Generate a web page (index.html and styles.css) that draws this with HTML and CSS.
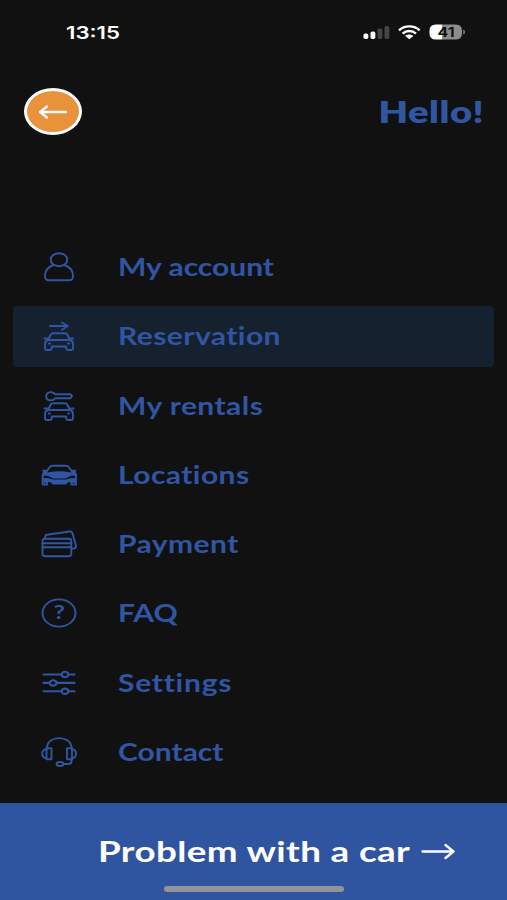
FILE: index.html
```html
<!DOCTYPE html>
<html lang="en">
<head>
    <meta charset="UTF-8">
    <title>Menu</title>
    <link rel="stylesheet" href="styles.css">
</head>
<body>

<div class="screen">
    <div class="status-bar">
        <span class="time">13:15</span>
        <svg class="status-icons" width="104" height="20" viewBox="0 0 104 20">
            <!-- signal -->
            <rect x="1.5" y="11.5" width="4.8" height="5.5" rx="1.8" fill="#fff"/>
            <rect x="8.5" y="9.5" width="4.8" height="7.5" rx="1.8" fill="#fff"/>
            <rect x="15.5" y="6.5" width="4.8" height="10.5" rx="1.8" fill="#454545"/>
            <rect x="22.5" y="4" width="4.8" height="13" rx="1.8" fill="#454545"/>
            <!-- wifi -->
            <g fill="none" stroke="#fff" stroke-width="2.4">
                <path d="M37 8.4C42.3 3 52.3 3 57.6 8.4"/>
                <path d="M40.6 11.6C44.3 8.2 50.3 8.2 54 11.6"/>
            </g>
            <path d="M43.2 14C45.6 12 49 12 51.4 14L47.3 17.2Z" fill="#fff"/>
            <!-- battery -->
            <path d="M74 2.5H80.5V17.5H74Q67.5 17.5 67.5 11.5V8.5Q67.5 2.5 74 2.5Z" fill="#fff"/>
            <path d="M80.5 2.5H93.5Q100 2.5 100 8.5V11.5Q100 17.5 93.5 17.5H80.5Z" fill="#8c8c8c"/>
            <path d="M101.3 7.5Q103 8 103 10T101.3 12.5Z" fill="#8c8c8c"/>
            <text class="battery-text" x="75.5" y="14.7" textLength="17" lengthAdjust="spacingAndGlyphs">41</text>
        </svg>
    </div>

    <header class="header">
        <button class="back" type="button" aria-label="Back">
            <svg width="30" height="16" viewBox="0 0 30 16"><path d="M28 8H2M9 2.5L2 8L9 13.5"/></svg>
        </button>
        <h1 class="hello">Hello!</h1>
    </header>

    <nav class="menu">
        <a class="item">
            <svg class="icon" viewBox="0 0 40 36">
                <ellipse cx="20" cy="10.7" rx="8.3" ry="6.5"/>
                <path d="M14.5 16C9 18 6 22 6 27Q6 31.3 10 31.3H30Q34 31.3 34 27C34 22 31 18 25.5 16"/>
            </svg>
            <span class="label tight">My account</span>
        </a>
        <a class="item active">
            <svg class="icon" viewBox="0 0 40 36">
                <path d="M11 8H28.5M23 4.5L28.8 8L23 11.8"/>
                <use href="#car"/>
            </svg>
            <span class="label">Reservation</span>
        </a>
        <a class="item">
            <svg class="icon" viewBox="0 0 40 36">
                <path d="M16 6.3H31.500L33 8L31.500 10.300H16C14.500 13 8.500 13.500 7.300 9.500C6.500 6 9 4.100 11.800 4.100Q14.800 4.100 16 6.300Z"/>
                <g id="car">
                    <path d="M9 22L11.5 17Q12.300 15.300 14.500 15.300H25.500Q27.700 15.300 28.500 17L31 22"/>
                    <path d="M5.500 20.500H8.500M31.500 20.500H34.500M9 22H31"/>
                    <path d="M9 22Q6 23 6 26V30Q6 32 8 32H10.500Q12.800 32 12.800 30V28.500H27.200V30Q27.200 32 29.500 32H32Q34 32 34 30V26Q34 23 31 22"/>
                    <path d="M9.800 25.500H11M29 25.500H30.200"/>
                </g>
            </svg>
            <span class="label">My rentals</span>
        </a>
        <a class="item">
            <svg class="icon" viewBox="0 0 40 36">
                <path d="M7.500 14.500L11 9.800Q12 8.800 14 8.800H26.500Q28.500 8.800 29.500 9.800L33 14.500"/>
                <path class="solid" d="M3 12.800H7L8.500 15.500Q20 13 32 15.500L33.500 12.800H37.500L36.500 15Q38 16.500 38 19L32.500 18.500L26.500 21.500H14L8 18.500L2.800 19Q2.800 16.500 4 15Z"/>
                <path d="M3.700 18V27.500H8V25.500M37 18V27.500H32.500V25.500"/>
                <path class="solid" d="M4 21L9.500 21.200L14 22.600H26.500L31 21.200L37 21L36 26L29 25L27 27.500H13.500L11.500 25L5 26Z"/>
            </svg>
            <span class="label">Locations</span>
        </a>
        <a class="item">
            <svg class="icon" viewBox="0 0 40 36">
                <rect x="3.500" y="12.800" width="28.800" height="17.500" rx="2.500"/>
                <path d="M3.500 17.200H32.300M3.500 21.300H32.300"/>
                <path d="M6 12V11Q6.200 9.200 8 8.800L30.500 5.500Q32.800 5.300 33.400 7L37 19.800Q37.200 21.800 35.500 22.300L32.500 22.900"/>
            </svg>
            <span class="label">Payment</span>
        </a>
        <a class="item">
            <svg class="icon" viewBox="0 0 40 36">
                <ellipse cx="20" cy="18" rx="16.5" ry="13.6"/>
                <text class="question" x="14.5" y="24.3" textLength="11.5" lengthAdjust="spacingAndGlyphs">?</text>
            </svg>
            <span class="label tight">FAQ</span>
        </a>
        <a class="item">
            <svg class="icon thick" viewBox="0 0 40 36">
                <path d="M4.5 9.5H22.5M29.5 9.5H35.5M4.5 17.9H11M17.5 17.9H35.5M4.5 26.3H22.5M29.5 26.3H35.5"/>
                <ellipse cx="26" cy="9.5" rx="3.4" ry="2.7"/>
                <ellipse cx="14.2" cy="17.9" rx="3.4" ry="2.7"/>
                <ellipse cx="26" cy="26.3" rx="3.4" ry="2.7"/>
            </svg>
            <span class="label wide">Settings</span>
        </a>
        <a class="item">
            <svg class="icon" viewBox="0 0 40 36">
                <path d="M8 14C8 0.8 32.5 0.8 32.5 14"/>
                <rect x="7.5" y="14.3" width="5" height="11"/>
                <rect x="28" y="14.3" width="5" height="11"/>
                <path d="M7.5 15.3Q3.2 15.8 3.2 19.8T7.5 24.3M33 15.3Q37 15.8 37 19.8T33 24.3M32.5 25.3V27.3Q32.5 30 29 30H24.5"/>
                <ellipse cx="21" cy="30" rx="3.5" ry="2"/>
            </svg>
            <span class="label tight">Contact</span>
        </a>
    </nav>

    <footer class="problem">
        <div class="problem-row">
            <span class="problem-text">Problem with a car</span>
            <svg class="problem-arrow" width="34" height="18" viewBox="0 0 34 18"><path d="M1.5 9.5H32M24.5 3L32.500 9.500L24.500 16"/></svg>
        </div>
        <div class="home-bar"></div>
    </footer>
</div>

</body>
</html>
```
FILE: styles.css
```css
* {
    box-sizing: border-box;
}
body {
    margin: 0;
    background-color: #111;
    font-family: Lato, "Liberation Sans", sans-serif;
}
.screen {
    width: 507px;
    height: 900px;
    display: flex;
    flex-direction: column;
    overflow: hidden;
}
.status-bar {
    height: 64px;
    padding: 0 41px 0 66px;
    display: flex;
    align-items: center;
    justify-content: space-between;
}
.time {
    color: #fff;
    font: 600 17.5px Inter, sans-serif;
    transform: scaleX(1.27);
    transform-origin: left;
}
.battery-text {
    font: 700 13px Inter, sans-serif;
    fill: #111;
}
.header {
    height: 95px;
    padding: 0 24px;
    display: flex;
    align-items: center;
    justify-content: space-between;
}
.back {
    width: 58px;
    height: 47px;
    padding: 0;
    border: 3px solid #fff;
    border-radius: 50%;
    background-color: #e8923c;
    display: flex;
    align-items: center;
    justify-content: center;
}
.back path, .problem-arrow path {
    fill: none;
    stroke: #fff;
    stroke-width: 2.3;
    stroke-linecap: round;
    stroke-linejoin: round;
}
.hello {
    margin: -2px -1px 0 0;
    font-size: 30px;
    font-weight: 800;
    letter-spacing: 0.4px;
    color: #3056a3;
    transform: scaleX(1.27);
    transform-origin: right;
}
.menu {
    margin-top: 77.5px;
    padding: 0 13px;
    display: flex;
    flex-direction: column;
    gap: 8.3px;
}
.item {
    height: 61px;
    padding-left: 26px;
    display: flex;
    align-items: center;
    border-radius: 4px;
    color: #3056a3;
}
.item.active {
    background-color: #15212e;
}
.icon {
    width: 40px;
    height: 36px;
    margin-right: 39px;
    fill: none;
    stroke: #3056a3;
    stroke-width: 1.9;
    stroke-linejoin: round;
    stroke-linecap: round;
}
.icon.thick {
    stroke-width: 2.1;
}
.icon .solid {
    fill: #3056a3;
    stroke: none;
}
.question {
    font: 700 18px Lato, sans-serif;
    fill: #3056a3;
    stroke: none;
}
.label {
    margin-top: -1px;
    font-size: 24px;
    font-weight: 700;
    letter-spacing: 0.35px;
    transform: scaleX(1.25);
    transform-origin: left;
}
.label.tight {
    letter-spacing: 0;
}
.label.wide {
    letter-spacing: 0.6px;
}
.problem {
    margin-top: auto;
    height: 97.5px;
    padding-top: 26px;
    background-color: #3055a0;
    display: flex;
    flex-direction: column;
    align-items: center;
}
.problem-row {
    width: 507px;
    height: 44px;
    padding: 0 52px 0 98px;
    display: flex;
    align-items: center;
    justify-content: space-between;
}
.problem-text {
    font-size: 28.5px;
    font-weight: 700;
    letter-spacing: 0.3px;
    color: #fff;
    transform: scaleX(1.29);
    transform-origin: left;
}
.home-bar {
    width: 180px;
    height: 5.5px;
    margin-top: 13.5px;
    border-radius: 3px;
    background-color: #929499;
}
```
